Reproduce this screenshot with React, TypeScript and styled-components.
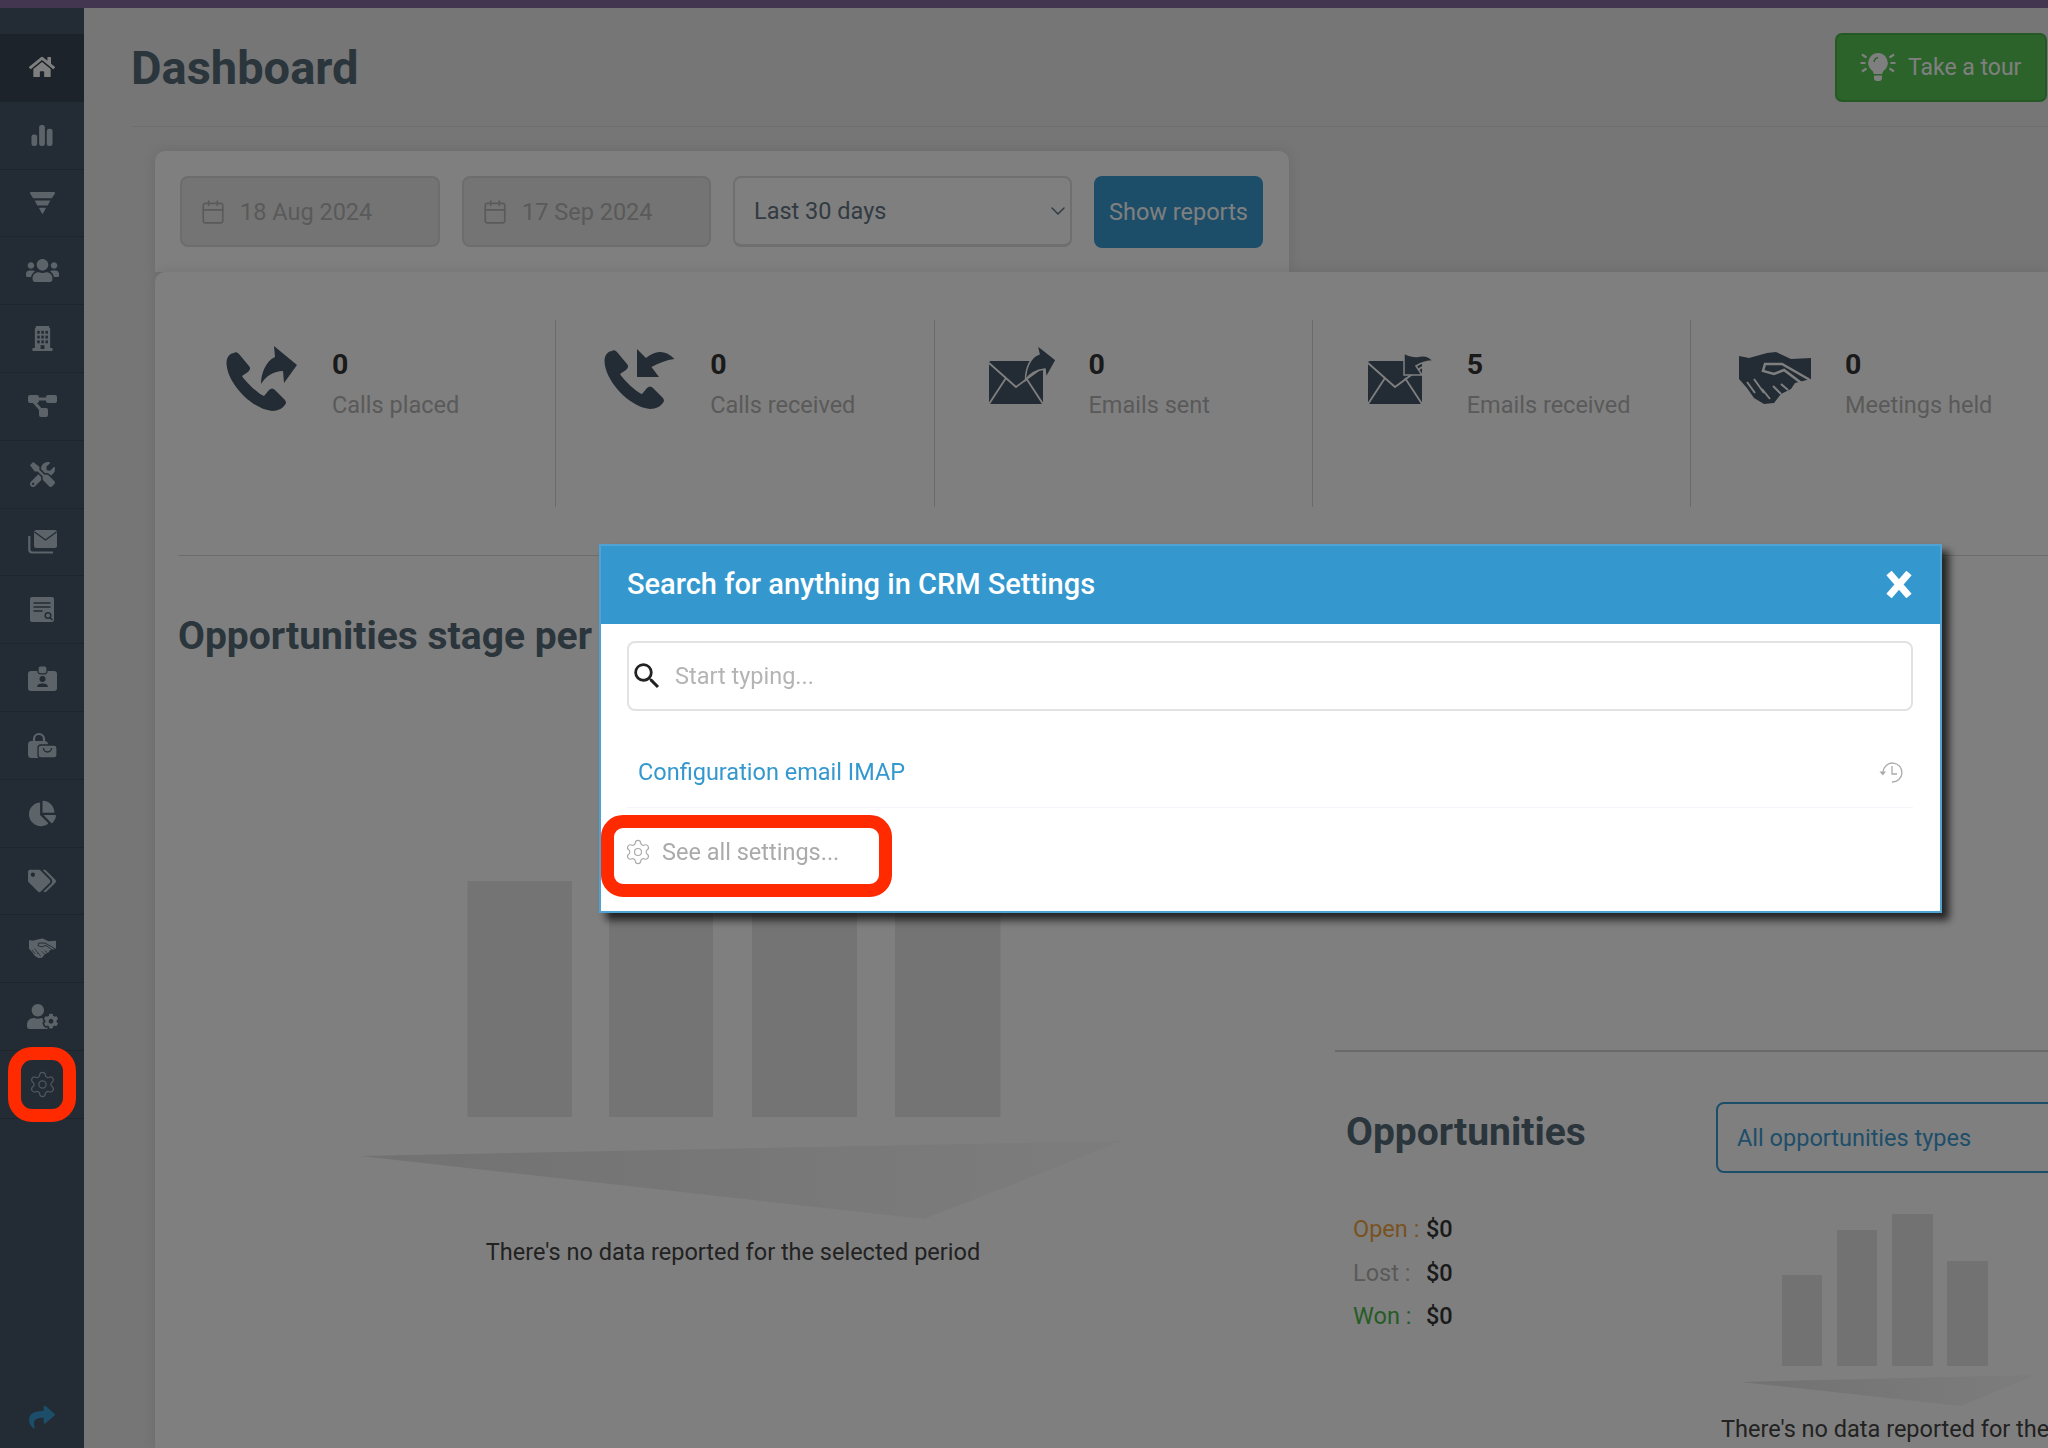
import React from 'react'
import styled, { createGlobalStyle } from 'styled-components'
import { Calendar, ChevronDown, Settings } from 'lucide-react'
import { FaChartPie, FaHome, FaShare, FaTags, FaTools, FaUserCog, FaUsers } from 'react-icons/fa'
import { MdSearch } from 'react-icons/md'

const GlobalStyle = createGlobalStyle`
  html, body, #root {
    margin: 0;
    height: 100%;
  }
  body {
    font-family: Roboto, "Liberation Sans", sans-serif;
    font-size: 23.5px;
    overflow: hidden;
    background: #ececec;
  }
  * {
    box-sizing: border-box;
  }
`

const SIDE = '#465868'
const SIDE_ICON = '#b8c6d2'
const DARK_ICON = '#465868'
const MUTED = '#b4b4b4'

const Shell = styled.div`
  width: 2048px;
  height: 1448px;
  display: flex;
  flex-direction: column;
  overflow: hidden;
`

const TopBar = styled.div`
  height: 8px;
  flex: none;
  background: #866ca0;
`

const Columns = styled.div`
  flex: 1;
  display: flex;
  min-height: 0;
`

const Sidebar = styled.nav`
  width: 84px;
  flex: none;
  display: flex;
  flex-direction: column;
  padding-top: 26px;
  background: ${SIDE};
`

const NavRow = styled.div<{ $active?: boolean }>`
  height: 67.8px;
  flex: none;
  display: flex;
  align-items: center;
  justify-content: center;
  color: ${(p) => (p.$active ? '#fff' : SIDE_ICON)};
  background: ${(p) => (p.$active ? '#384654' : 'transparent')};
  border-bottom: 1px solid #3b4b59;
`

const NavBottom = styled.div`
  margin-top: auto;
  height: 62px;
  display: flex;
  align-items: center;
  justify-content: center;
  color: #389ad2;
`

const Main = styled.main`
  flex: 1;
  min-width: 0;
  display: flex;
  flex-direction: column;
  padding-left: 48px;
  overflow: hidden;
`

const PageHead = styled.header`
  height: 119px;
  flex: none;
  display: flex;
  align-items: center;
  justify-content: space-between;
  padding-right: 1px;
  border-bottom: 1px solid #dcdcdc;
`

const PageTitle = styled.h1`
  margin: 0 0 0 -1px;
  font-size: 47px;
  font-weight: 700;
  color: #566a78;
`

const TourButton = styled.button`
  width: 212px;
  height: 69px;
  display: flex;
  align-items: center;
  gap: 12px;
  padding: 0 0 0 23px;
  font: inherit;
  font-size: 23px;
  color: #fff;
  background: #56c656;
  border: 2px solid #48b048;
  border-radius: 7px;
`

const Content = styled.div`
  flex: 1;
  min-height: 0;
  display: flex;
  flex-direction: column;
  margin: 24px 0 0 23px;
`

const FilterCard = styled.section`
  width: 1134px;
  height: 121px;
  flex: none;
  display: flex;
  gap: 22px;
  padding: 25px;
  background: #fff;
  border-radius: 10px 10px 0 0;
  box-shadow: 0 0 14px rgba(0, 0, 0, 0.1);
`

const DateField = styled.div<{ $width: number }>`
  width: ${(p) => p.$width}px;
  height: 71px;
  display: flex;
  align-items: center;
  gap: 14px;
  padding-left: 18px;
  color: ${MUTED};
  background: #e9e9e9;
  border: 2px solid #dadada;
  border-radius: 8px;
`

const RangeSelect = styled.div`
  width: 339px;
  height: 71px;
  display: flex;
  align-items: center;
  justify-content: space-between;
  padding: 0 0 0 19px;
  color: #667684;
  background: #fff;
  border: 2px solid #dedede;
  border-bottom-width: 3px;
  border-radius: 8px;
`

const ShowButton = styled.button`
  width: 169px;
  height: 72px;
  padding: 0;
  font: inherit;
  color: #fff;
  background: #389ad2;
  border: 0;
  border-radius: 8px;
`

const StatsCard = styled.section`
  position: relative;
  flex: 1;
  min-height: 0;
  padding: 48px 0 0 23px;
  background: #fff;
  border-radius: 10px 0 0 0;
  box-shadow: 0 0 14px rgba(0, 0, 0, 0.1);
`

const StatRow = styled.div`
  display: grid;
  grid-template-columns: repeat(5, 378.25px);
  padding-bottom: 48px;
  border-bottom: 1px solid #d8d8d8;
`

const Stat = styled.div`
  height: 187px;
  display: flex;
  border-right: 1.5px solid #d4d4d4;
`

const StatIcon = styled.div`
  width: 154px;
  flex: none;
  display: flex;
  justify-content: center;
  padding: 25px 0 0 14px;
`

const StatText = styled.div`
  padding-top: 28px;
`

const StatValue = styled.div`
  font-size: 28.5px;
  line-height: 34px;
  font-weight: 700;
  color: #343434;
`

const StatLabel = styled.div`
  margin-top: 9px;
  line-height: 28px;
  color: ${MUTED};
`

const Lower = styled.div`
  display: flex;
`

const LeftColumn = styled.div`
  width: 1157px;
  flex: none;
  padding-top: 57px;
`

const SectionTitle = styled.h2<{ $width?: number }>`
  margin: 0;
  flex: none;
  width: ${(p) => (p.$width ? `${p.$width}px` : 'auto')};
  font-size: 39px;
  line-height: 46px;
  font-weight: 700;
  color: #566a78;
`

const ChartArt = styled.svg<{ $left: number }>`
  display: block;
  margin-left: ${(p) => p.$left}px;
`

const LeftArt = styled(ChartArt)`
  margin-top: 222px;
`

const EmptyNote = styled.p`
  width: 1110px;
  margin: 19px 0 0;
  line-height: 28px;
  text-align: center;
  color: #444;
`

const RightColumn = styled.div`
  flex: 1;
  min-width: 0;
  margin-top: 494px;
  padding: 50px 0 0 11px;
  border-top: 2px solid #d4d4d4;
`

const OppHead = styled.div`
  display: flex;
  align-items: flex-start;

  h2 {
    margin-top: 7px;
  }
`

const TypeSelect = styled.div`
  width: 400px;
  height: 71px;
  flex: none;
  display: flex;
  align-items: center;
  padding: 0 0 0 19px;
  color: #3c9cd2;
  background: #fff;
  border: 2px solid #389ad2;
  border-radius: 8px;
`

const OppBody = styled.div`
  display: flex;
  margin-top: 34px;
`

const Totals = styled.dl`
  width: 371px;
  flex: none;
  margin: 0;
  padding-left: 7px;
`

const TotalRow = styled.div<{ $color: string }>`
  height: 43.7px;
  display: flex;
  align-items: center;

  dt {
    width: 73px;
    color: ${(p) => p.$color};
  }

  dd {
    margin: 0;
    font-weight: 500;
    color: #343434;
  }
`

const OppChart = styled.div`
  flex: 1;
  min-width: 0;
  padding-top: 7px;
`

const ClippedNote = styled.p`
  margin: 9px 0 0 4px;
  line-height: 28px;
  white-space: nowrap;
  color: #444;
`

const Overlay = styled.div`
  position: fixed;
  inset: 0;
  padding: 544px 0 0 599px;
  background: rgba(0, 0, 0, 0.5);
`

const Modal = styled.div`
  position: relative;
  width: 1343px;
  height: 369px;
  background: #fff;
  border: 2px solid #4fa2d4;
  box-shadow: 7px 7px 8px rgba(0, 0, 0, 0.72);
`

const ModalHead = styled.div`
  height: 78px;
  display: flex;
  align-items: center;
  justify-content: space-between;
  padding: 0 28px 2px 26px;
  font-size: 29px;
  font-weight: 500;
  color: #fff;
  background: #3498cf;
`

const ModalBody = styled.div`
  padding: 17px 27px 0 26px;
`

const SearchBox = styled.div`
  height: 70px;
  display: flex;
  align-items: center;
  gap: 11px;
  padding-left: 1px;
  color: #222;
  background: #fff;
  border: 2px solid #e2e2e2;
  border-radius: 8px;
`

const Placeholder = styled.span`
  color: #b4b4b4;
`

const RecentRow = styled.div`
  height: 97px;
  display: flex;
  align-items: center;
  justify-content: space-between;
  padding: 25px 10px 0 11px;
  color: #aaa;
  border-bottom: 1px solid #f2f6fb;
`

const RecentLink = styled.a`
  color: #3498cf;
`

const AllSettings = styled.div`
  display: flex;
  align-items: center;
  gap: 10px;
  margin: 30px 0 0 -3px;
  line-height: 28px;
  color: #aaa;
`

const RedRing = styled.div<{ $radius: number }>`
  position: absolute;
  border: 13px solid #ff2a00;
  border-radius: ${(p) => p.$radius}px;
`

const GearRing = styled(RedRing)`
  left: 8px;
  top: 1047px;
  width: 68px;
  height: 75px;
`

const SettingsRing = styled(RedRing)`
  left: 0;
  top: 269px;
  width: 291px;
  height: 82px;
`

const DimGear = styled(Settings)`
  opacity: 0.8;
`

const Glyph = ({ w, h, box, children }: { w: number; h: number; box: string; children: React.ReactNode }) => (
  <svg width={w} height={h} viewBox={box} fill="currentColor" aria-hidden="true">
    {children}
  </svg>
)

// clasped hands, drawn on a 72 x 53 grid
const HandshakeIcon = ({ w, h, cut }: { w: number; h: number; cut: string }) => (
  <Glyph w={w} h={h} box="0 0 72 53">
    <path d="M0 4l10 2L28 1l9-1 15 7 20-1v21l-16 4-4 6-10 5-7 9-10 1-10-6-7-10-8-9z" />
    <path d="M71 28L43 12H26l-2 7 11 3 10-4 20 15" fill="none" stroke={cut} strokeWidth="2.500" />
    <path
      d="M8 30l8 11M15 27l10 14M23 37l8 10M34 34l8 8M42 32l7 6"
      fill="none"
      stroke={cut}
      strokeWidth="2"
    />
  </Glyph>
)

const navIcons: React.ReactNode[] = [
  <FaHome size={26} />,
  <Glyph w={24} h={23} box="0 0 24 24">
    <rect x="1" y="11" width="6" height="12" rx="2.500" />
    <rect x="9" y="1" width="6" height="22" rx="2.500" />
    <rect x="17" y="5" width="6" height="18" rx="2.500" />
  </Glyph>,
  <Glyph w={25} h={22} box="0 0 24 21">
    <path d="M1 0h22a1 1 0 0 1 .8 1.500L21 6H3L.2 1.500A1 1 0 0 1 1 0z" />
    <path d="M4.500 8h15L17 13H7z" />
    <path d="M8.500 15h7l-3 5.500a.6.6 0 0 1-1 0z" />
  </Glyph>,
  <FaUsers size={33} />,
  <Glyph w={21} h={25} box="0 0 22 26">
    <path d="M4 0h14v2h1v21h2.500v3H.5v-3H3V2h1z" />
    <g fill={SIDE}>
      {[5, 10, 15].map((y) =>
        [5.5, 9.8, 14.1].map((x) => <rect key={`${x}-${y}`} x={x} y={y} width="2.600" height="3" />)
      )}
      <rect x="9" y="20" width="4" height="4" />
    </g>
  </Glyph>,
  <Glyph w={29} h={22} box="0 0 29 22">
    <path d="M8 4h14M6 7l8 9" fill="none" stroke="currentColor" strokeWidth="3" />
    <rect x="0" y="0" width="11" height="8" rx="2" />
    <rect x="18" y="0" width="11" height="8" rx="2" />
    <rect x="11" y="13" width="9" height="9" rx="2" />
  </Glyph>,
  <FaTools size={25} />,
  <Glyph w={29} h={24} box="0 0 29 24">
    <rect x="6" y="0" width="23" height="18" rx="2.500" />
    <path d="M6.500 2l11 8 11-8" fill="none" stroke={SIDE} strokeWidth="1.400" />
    <path d="M1.300 6v13.500a3 3 0 0 0 3 3H25" fill="none" stroke="currentColor" strokeWidth="2.200" />
  </Glyph>,
  <Glyph w={24} h={25} box="0 0 24 25">
    <rect x="0" y="0" width="24" height="25" rx="2" />
    <path d="M3.500 6h17M3.500 10h17M3.500 14h9" stroke={SIDE} strokeWidth="1.500" />
    <circle cx="18" cy="18.500" r="2.800" fill="none" stroke={SIDE} strokeWidth="1.500" />
    <path d="M20 20.500l2.500 2.500" stroke={SIDE} strokeWidth="1.500" />
  </Glyph>,
  <Glyph w={29} h={26} box="0 0 29 26">
    <rect x="0" y="6" width="29" height="20" rx="3" />
    <rect x="10" y="0.800" width="9" height="8" rx="2.500" stroke={SIDE} strokeWidth="1.200" />
    <circle cx="14.500" cy="14" r="3" fill={SIDE} />
    <path d="M9 22c.5-3 2.500-3.500 5.500-3.500S19.500 19 20 22z" fill={SIDE} />
  </Glyph>,
  <Glyph w={29} h={26} box="0 0 29 26">
    <path d="M6 10V7a5 5 0 0 1 10 0v3" fill="none" stroke="currentColor" strokeWidth="2.200" />
    <rect x="0" y="9" width="20" height="17" rx="3.500" />
    <rect x="10" y="13" width="19" height="13" rx="3" stroke={SIDE} strokeWidth="1.300" />
    <path d="M15.500 16a4 4 0 0 0 8 0" fill="none" stroke={SIDE} strokeWidth="1.400" />
  </Glyph>,
  <FaChartPie size={27} />,
  <FaTags size={28} />,
  <HandshakeIcon w={27} h={21} cut={SIDE} />,
  <FaUserCog size={31} />,
  <DimGear size={29} strokeWidth={1} />
]

const PHONE =
  'M8 6C5 6 1 9 .5 15 0 35 25 62 46 64c6 0 12-3 14-8 0-2-1-3-2-4l-9-9c-2-2-4-2-6 0l-5 6c-6-2-19-15-22-20l6-4c2-2 3-4 1-6L13 7c-2-2-4-2-5-1z'

const CallPlacedIcon = () => (
  <svg width="72" height="67" viewBox="0 -2 72 67" fill={DARK_ICON} aria-hidden="true">
    <path d={PHONE} />
    <path d="M48-1l23 19-13 18-1-12c-9 0-17 5-22 13 0-11 5-23 14-27z" />
  </svg>
)

const CallReceivedIcon = () => (
  <svg width="72" height="67" viewBox="0 0 72 67" fill={DARK_ICON} aria-hidden="true">
    <path d={PHONE} />
    <path d="M33 4v28h22l-7.500-10c7-4 15-7 23-8-5-5-10-7.500-15.500-7-5 .5-9 3-13 6z" />
  </svg>
)

const Envelope = () => (
  <>
    <rect x="0" y="16" width="54" height="43" rx="2" />
    <path
      d="M0 18l27 24 27-20M0 59l17-26M54 59L37 33"
      fill="none"
      stroke="#fff"
      strokeWidth="1.800"
    />
  </>
)

const MailSentIcon = () => (
  <svg width="76" height="60" viewBox="-8 0 76 60" fill={DARK_ICON} aria-hidden="true">
    <Envelope />
    <path d="M48 0l19 15-10 18-1-9c-8 1-15 4-19.500 11 0-12 5-23 13.500-26z" stroke="#fff" strokeWidth="1.500" />
  </svg>
)

const MailReceivedIcon = () => (
  <svg width="74" height="60" viewBox="-8 0 74 60" fill={DARK_ICON} aria-hidden="true">
    <Envelope />
    <path d="M36 8v22h18l-6-9c5-3 11-5 17-5-3-4-8-6-13-5-4 .5-8 2-16-3z" stroke="#fff" strokeWidth="1.500" />
  </svg>
)

const BulbIcon = () => (
  <svg width="36" height="30" viewBox="0 0 36 30" aria-hidden="true">
    <path
      d="M18 1a9.800 9.800 0 0 0-6.300 17.200c1.300 1.100 1.800 2.400 2 3.800h8.600c.2-1.400.7-2.700 2-3.800A9.800 9.800 0 0 0 18 1z"
      fill="#fff"
    />
    <path d="M14 23.500h8v2.500a3 3 0 0 1-3 3h-2a3 3 0 0 1-3-3z" fill="#fff" />
    <path d="M14 10c.3-2.500 2-4 4-4.500" fill="none" stroke="#56c656" strokeWidth="1.500" />
    <path
      d="M.5 11h5M30.500 11h5M2 2.500l4.500 3M34 2.500l-4.500 3M2 19.500l4.500-3M34 19.500l-4.500-3"
      stroke="#fff"
      strokeWidth="2.200"
    />
  </svg>
)

const CloseIcon = () => (
  <svg width="26" height="27" viewBox="0 0 26 27" aria-hidden="true">
    <path d="M3 2l20 23M23 2L3 25" stroke="#fff" strokeWidth="7" />
  </svg>
)

const HistoryIcon = () => (
  <svg width="24" height="24" viewBox="0 0 24 24" fill="none" stroke="currentColor" strokeWidth="1.300" aria-hidden="true">
    <path d="M4 12a9.500 9.500 0 1 1 9 10" />
    <path d="M0.500 11.500h6.500L3.800 15.500z" fill="currentColor" stroke="none" />
    <path d="M13 6v8h5" />
  </svg>
)

const stats = [
  { value: '0', label: 'Calls placed', icon: <CallPlacedIcon /> },
  { value: '0', label: 'Calls received', icon: <CallReceivedIcon /> },
  { value: '0', label: 'Emails sent', icon: <MailSentIcon /> },
  { value: '5', label: 'Emails received', icon: <MailReceivedIcon /> },
  {
    value: '0',
    label: 'Meetings held',
    icon: (
      <span style={{ color: DARK_ICON, paddingTop: 7 }}>
        <HandshakeIcon w={72} h={53} cut="#fff" />
      </span>
    )
  }
]

const totals = [
  { label: 'Open :', color: '#f2a63e' },
  { label: 'Lost :', color: MUTED },
  { label: 'Won :', color: '#4cb84c' }
]

const App = () => {
  return (
    <Shell>
      <GlobalStyle />
      <TopBar />
      <Columns>
        <Sidebar>
          {navIcons.map((icon, index) => (
            <NavRow key={`nav-${String(index)}`} $active={index === 0}>
              {icon}
            </NavRow>
          ))}
          <NavBottom>
            <FaShare size={26} />
          </NavBottom>
        </Sidebar>

        <Main>
          <PageHead>
            <PageTitle>Dashboard</PageTitle>
            <TourButton>
              <BulbIcon />
              Take a tour
            </TourButton>
          </PageHead>

          <Content>
            <FilterCard>
              <DateField $width={260}>
                <Calendar size={26} strokeWidth={1.500} />
                18 Aug 2024
              </DateField>
              <DateField $width={249}>
                <Calendar size={26} strokeWidth={1.500} />
                17 Sep 2024
              </DateField>
              <RangeSelect>
                Last 30 days
                <ChevronDown size={24} strokeWidth={1.500} />
              </RangeSelect>
              <ShowButton>Show reports</ShowButton>
            </FilterCard>

            <StatsCard>
              <StatRow>
                {stats.map((stat) => (
                  <Stat key={stat.label}>
                    <StatIcon>{stat.icon}</StatIcon>
                    <StatText>
                      <StatValue>{stat.value}</StatValue>
                      <StatLabel>{stat.label}</StatLabel>
                    </StatText>
                  </Stat>
                ))}
              </StatRow>

              <Lower>
                <LeftColumn>
                  <SectionTitle>Opportunities stage per</SectionTitle>
                  <LeftArt $left={182} width="763" height="338" viewBox="0 0 763 338" aria-hidden="true">
                    <defs>
                      <linearGradient id="floor-left" x1="0" x2="1" y1="0" y2="0">
                        <stop offset="0" stopColor="#e4e4e4" />
                        <stop offset="1" stopColor="#fafafa" />
                      </linearGradient>
                    </defs>
                    <g fill="#e8e8e8">
                      <rect x="107.500" y="0" width="104.500" height="236" />
                      <rect x="249" y="0" width="104" height="236" />
                      <rect x="392" y="0" width="105" height="236" />
                      <rect x="535" y="0" width="105.500" height="236" />
                    </g>
                    <path d="M0 275L763 260 564 338z" fill="url(#floor-left)" />
                  </LeftArt>
                  <EmptyNote>There's no data reported for the selected period</EmptyNote>
                </LeftColumn>

                <RightColumn>
                  <OppHead>
                    <SectionTitle $width={370}>Opportunities</SectionTitle>
                    <TypeSelect>All opportunities types</TypeSelect>
                  </OppHead>
                  <OppBody>
                    <Totals>
                      {totals.map((total) => (
                        <TotalRow key={total.label} $color={total.color}>
                          <dt>{total.label}</dt>
                          <dd>$0</dd>
                        </TotalRow>
                      ))}
                    </Totals>
                    <OppChart>
                      <ChartArt $left={24} width="294" height="192" viewBox="0 0 294 192" aria-hidden="true">
                        <defs>
                          <linearGradient id="floor-right" x1="0" x2="1" y1="0" y2="0">
                            <stop offset="0" stopColor="#e4e4e4" />
                            <stop offset="1" stopColor="#fafafa" />
                          </linearGradient>
                        </defs>
                        <g fill="#e4e4e4">
                          <rect x="41" y="61" width="40" height="91" />
                          <rect x="96" y="16" width="40" height="136" />
                          <rect x="151" y="0" width="41" height="152" />
                          <rect x="206" y="47" width="41" height="105" />
                        </g>
                        <path d="M0 168L294 161 220 192z" fill="url(#floor-right)" />
                      </ChartArt>
                      <ClippedNote>There's no data reported for the</ClippedNote>
                    </OppChart>
                  </OppBody>
                </RightColumn>
              </Lower>
            </StatsCard>
          </Content>
        </Main>
      </Columns>

      <Overlay>
        <GearRing $radius={24} />
        <Modal>
          <ModalHead>
            Search for anything in CRM Settings
            <CloseIcon />
          </ModalHead>
          <ModalBody>
            <SearchBox>
              <MdSearch size={34} />
              <Placeholder>Start typing...</Placeholder>
            </SearchBox>
            <RecentRow>
              <RecentLink>Configuration email IMAP</RecentLink>
              <HistoryIcon />
            </RecentRow>
            <AllSettings>
              <Settings size={28} strokeWidth={1} />
              See all settings...
            </AllSettings>
          </ModalBody>
          <SettingsRing $radius={22} />
        </Modal>
      </Overlay>
    </Shell>
  )
}

export default App
